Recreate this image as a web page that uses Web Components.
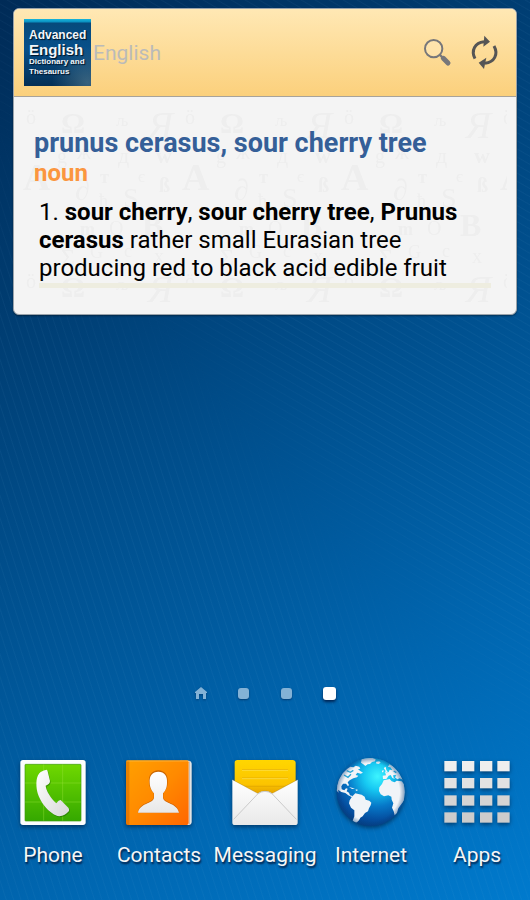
<!DOCTYPE html>
<html lang="en">
<head>
<meta charset="utf-8">
<meta name="viewport" content="width=device-width, initial-scale=1">
<title>Home</title>
<style>
    html, body {
        margin: 0;
        background: #0062ad;
        font-family: Roboto, "Liberation Sans", sans-serif;
    }
</style>
</head>
<body>
<home-screen>
    <dictionary-widget slot="widget" placeholder="English">
        <word-entry word="prunus cerasus, sour cherry tree" pos="noun">
            1. <b>sour cherry</b>, <b>sour cherry tree</b>, <b>Prunus cerasus</b> rather small Eurasian tree producing red to black acid edible fruit
        </word-entry>
    </dictionary-widget>
    <page-dots slot="pages" count="4" current="4"></page-dots>
    <app-icon slot="dock" icon="phone">Phone</app-icon>
    <app-icon slot="dock" icon="contacts">Contacts</app-icon>
    <app-icon slot="dock" icon="messaging">Messaging</app-icon>
    <app-icon slot="dock" icon="internet">Internet</app-icon>
    <app-icon slot="dock" icon="apps">Apps</app-icon>
</home-screen>

<script>
/**
 * Full screen wallpaper with a widget area, page dots and a dock
 */
class HomeScreen extends HTMLElement {
    constructor() {
        super();
        this.attachShadow({ mode: 'open' });
    }

    connectedCallback() {
        this.shadowRoot.innerHTML = `
            <style>
                :host {
                    display: flex;
                    flex-direction: column;
                    position: relative;
                    isolation: isolate;
                    box-sizing: border-box;
                    min-height: 100vh;
                    padding: 8px 0 33px;
                    background: linear-gradient(148deg, #002b57 0%, #003c70 25%, #005190 50%, #0066b0 75%, #007acd 100%);
                }
                /* two sets of fine lines that fade into each other */
                :host::before, :host::after {
                    content: "";
                    position: absolute;
                    inset: 0;
                    z-index: -1;
                }
                :host::before {
                    background: repeating-linear-gradient(72deg, transparent 0 5px, rgba(120, 190, 230, 0.06) 6px, transparent 7px);
                    mask-image: linear-gradient(50deg, #000 40%, transparent 52%);
                }
                :host::after {
                    background: repeating-linear-gradient(30deg, transparent 0 5px, rgba(120, 190, 230, 0.06) 6px, transparent 7px);
                    mask-image: linear-gradient(50deg, transparent 48%, #000 60%);
                }
                main {
                    flex: 1;
                    padding: 0 13px;
                }
                nav {
                    display: grid;
                    grid-template-columns: repeat(5, minmax(0, 1fr));
                    margin-top: 48px;
                }
            </style>
            <main><slot name="widget"></slot></main>
            <slot name="pages"></slot>
            <nav aria-label="Dock"><slot name="dock"></slot></nav>
        `;
    }
}

/**
 * Dictionary card: logo, search field and the entry passed in the slot
 */
class DictionaryWidget extends HTMLElement {
    constructor() {
        super();
        this.attachShadow({ mode: 'open' });
    }

    connectedCallback() {
        const placeholder = this.getAttribute('placeholder') || '';

        this.shadowRoot.innerHTML = `
            <style>
                :host {
                    display: block;
                    border: 1px solid #9aa3ab;
                    border-radius: 6px;
                    overflow: hidden;
                    background: #f4f4f4;
                    box-shadow: 0 1px 2px rgba(0, 0, 0, 0.4);
                }
                header {
                    display: flex;
                    align-items: center;
                    padding: 10px 9px 10px 10px;
                    background: linear-gradient(#ffe8b4, #fbd07c);
                    border-bottom: 1px solid #a8a39a;
                }
                form {
                    display: flex;
                    flex: 1;
                    align-items: center;
                    min-width: 0;
                }
                input {
                    flex: 1;
                    min-width: 0;
                    height: 48px;
                    padding: 0 2px;
                    border: 0;
                    outline: 0;
                    background: none;
                    color: #333;
                    font: 21px Roboto, "Liberation Sans", sans-serif;
                }
                input::placeholder {
                    color: #bbbbb9;
                    opacity: 1;
                }
                button {
                    display: grid;
                    place-items: center;
                    width: 47px;
                    height: 48px;
                    padding: 0;
                    border: 0;
                    background: none;
                }
                svg {
                    display: block;
                    width: 36px;
                    height: 36px;
                }
            </style>
            <header>
                <dictionary-logo></dictionary-logo>
                <form onsubmit="return false">
                    <input type="text" aria-label="Search" placeholder="${placeholder}">
                    <button type="submit" aria-label="Find">
                        <svg viewBox="462 104 108 108">
                            <path d="M525 164 L536 175" stroke="#77777a" stroke-width="7"/>
                            <circle cx="506" cy="145" r="26" fill="#ffeec9" fill-opacity=".35" stroke="#77777a" stroke-width="6"/>
                            <path d="M535 174 L549 188" stroke="#77777a" stroke-width="15" stroke-linecap="round"/>
                        </svg>
                    </button>
                    <button type="button" aria-label="Refresh">
                        <svg viewBox="603 104 108 108">
                            <path d="M630 175 C617 150 630 127 657 124" fill="none" stroke="#555" stroke-width="9"/>
                            <path d="M658 106 L675 124 L655 139 Z" fill="#555"/>
                            <path d="M687 137 C701 162 688 186 660 189" fill="none" stroke="#555" stroke-width="9"/>
                            <path d="M657 206 L641 187 L664 172 Z" fill="#555"/>
                        </svg>
                    </button>
                </form>
            </header>
            <slot></slot>
        `;
    }
}

/**
 * Square dictionary logo
 */
class DictionaryLogo extends HTMLElement {
    constructor() {
        super();
        this.attachShadow({ mode: 'open' });
    }

    connectedCallback() {
        this.shadowRoot.innerHTML = `
            <style>
                :host {
                    display: block;
                    box-sizing: border-box;
                    width: 67px;
                    height: 67px;
                    padding: 9px 0 0 5px;
                    background:
                        radial-gradient(circle at 95% 95%, rgba(90, 130, 150, 0.6), transparent 40%),
                        linear-gradient(#18b6dc 0, #0a8fc0 3px, #064a7c 4px, #07508a 45%, #042f55 100%);
                    color: #f2f6fa;
                    font-family: "Liberation Sans", Arial, sans-serif;
                    font-weight: bold;
                    white-space: nowrap;
                    text-shadow: 1px 1px 1px #012;
                }
                span {
                    display: block;
                    font-size: 8px;
                    line-height: 10px;
                }
                .top {
                    font-size: 12px;
                    line-height: 14px;
                }
                .name {
                    font-size: 15px;
                    line-height: 15px;
                }
            </style>
            <span class="top">Advanced</span>
            <span class="name">English</span>
            <span>Dictionary and</span>
            <span>Thesaurus</span>
        `;
    }
}

/**
 * One dictionary entry on a faint sheet of scattered letters
 */
class WordEntry extends HTMLElement {
    constructor() {
        super();
        this.attachShadow({ mode: 'open' });
    }

    /**
     * Letters of one background tile: glyph, x, baseline, size, weight
     */
    getLetters() {
        return [
            ['ö', 3, 15, 20, 400], ['Ω', 38, 24, 30, 700], ['љ', 93, 17, 17, 400],
            ['g', 34, 54, 20, 400], ['ж', 54, 50, 20, 400], ['д', 95, 54, 22, 400],
            ['w', 133, 54, 22, 700], ['A', 0, 81, 38, 700], ['∂', 52, 91, 30, 400],
            ['т', 77, 74, 18, 700], ['є', 115, 73, 16, 400], ['ß', 136, 83, 20, 700],
            ['S', 100, 98, 28, 400], ['ђ', 76, 98, 18, 400], ['m', 57, 126, 18, 700],
            ['O', 86, 126, 20, 400], ['B', 119, 127, 32, 700], ['Σ', 38, 156, 24, 400],
            ['G', 67, 149, 18, 400], ['c', 101, 148, 18, 400], ['x', 131, 154, 20, 400]
        ];
    }

    connectedCallback() {
        const word = this.getAttribute('word') || '';
        const pos = this.getAttribute('pos') || '';
        const letters = this.getLetters().map(([glyph, x, y, size, weight]) =>
            `<text x="${x}" y="${y}" font-size="${size}" font-weight="${weight}">${glyph}</text>`
        ).join('');

        this.shadowRoot.innerHTML = `
            <style>
                :host {
                    display: block;
                    position: relative;
                    padding: 30px 20px 26px;
                    color: #000;
                }
                .sheet {
                    position: absolute;
                    inset: 12px 9px 9px;
                    width: calc(100% - 18px);
                    height: calc(100% - 21px);
                }
                article {
                    position: relative;
                }
                h1, h2, p {
                    margin: 0;
                }
                h1 {
                    color: #355f98;
                    font-size: 27px;
                    line-height: 32px;
                }
                h2 {
                    color: #fb963f;
                    font-size: 24px;
                    line-height: 28px;
                }
                p {
                    margin: 11px 5px 0;
                    padding-bottom: 1px;
                    border-bottom: 5px solid #eeede0;
                    font-size: 24px;
                    line-height: 28px;
                }
            </style>
            <svg class="sheet" aria-hidden="true">
                <defs>
                    <pattern id="letters" width="159" height="164" patternUnits="userSpaceOnUse">
                        <g fill="#eeeeee" font-family="Liberation Serif, serif">
                            ${letters}
                            <text x="125" y="29" font-size="38" font-style="italic">Я</text>
                        </g>
                    </pattern>
                </defs>
                <rect width="100%" height="100%" fill="url(#letters)"/>
            </svg>
            <article>
                <h1>${word}</h1>
                <h2>${pos}</h2>
                <p><slot></slot></p>
            </article>
        `;
    }
}

/**
 * Row of page markers, the first one is the home page
 */
class PageDots extends HTMLElement {
    constructor() {
        super();
        this.attachShadow({ mode: 'open' });
    }

    static get observedAttributes() {
        return ['count', 'current'];
    }

    connectedCallback() {
        this.render();
    }

    attributeChangedCallback(name, oldValue, newValue) {
        if (oldValue !== newValue) {
            this.render();
        }
    }

    render() {
        const count = Number(this.getAttribute('count')) || 1;
        const current = Number(this.getAttribute('current')) || 1;
        const home = '<svg viewBox="0 0 12 12"><path d="M6 0 L12 5 V6 H11 V12 H8 V7 H4 V12 H1 V6 H0 V5 Z" fill="#83b2d6"/></svg>';

        let dots = '';
        for (let i = 1; i <= count; i++) {
            const state = i === current ? ' aria-current="page"' : '';
            dots += `<button type="button" aria-label="Page ${i}"${state}>${i === 1 ? home : '<i></i>'}</button>`;
        }

        this.shadowRoot.innerHTML = `
            <style>
                :host {
                    display: flex;
                    justify-content: center;
                }
                button {
                    display: grid;
                    place-items: center;
                    width: 43px;
                    height: 32px;
                    padding: 0;
                    border: 0;
                    background: none;
                }
                svg {
                    width: 12px;
                    height: 12px;
                    filter: drop-shadow(0 1px 1px rgba(0, 20, 60, 0.4));
                }
                i {
                    width: 11px;
                    height: 11px;
                    border-radius: 3px;
                    background: #83b2d6;
                    box-shadow: 0 1px 2px rgba(0, 20, 60, 0.5);
                }
                [aria-current] i {
                    width: 13px;
                    height: 13px;
                    background: #fff;
                    box-shadow: 0 2px 3px rgba(0, 20, 60, 0.8);
                }
            </style>
            ${dots}
        `;
    }
}

/**
 * Dock launcher: a drawn icon above its slotted label
 */
class AppIcon extends HTMLElement {
    constructor() {
        super();
        this.attachShadow({ mode: 'open' });
    }

    /**
     * Get the drawing for an icon name
     */
    getIcon(name) {
        const icons = {
            phone: `
                <svg viewBox="51 51 216 216">
                    <defs>
                        <linearGradient id="green" x2="0" y2="1"><stop stop-color="#6fd800"/><stop offset="1" stop-color="#35a800"/></linearGradient>
                        <linearGradient id="handset" x2="1" y2="1"><stop stop-color="#fff"/><stop offset="1" stop-color="#d8d8d8"/></linearGradient>
                    </defs>
                    <rect x="61" y="60" width="196" height="195" rx="8" fill="#fdfdfd"/>
                    <rect x="75" y="73" width="168" height="170" rx="2" fill="url(#green)" stroke="#3c9a0c" stroke-width="2"/>
                    <path d="M131 73 V242 M188 73 V242 M75 129 H243 M75 186 H243" stroke="#9be63a" stroke-opacity=".6" stroke-width="2"/>
                    <path d="M122 96 Q132 90 140 89 Q143 91 144 98 L150 123 Q150 133 137 137 C138 152 154 177 169 190 Q176 180 182 180 L205 203 Q208 206 207 213 Q195 227 178 229 C150 224 120 188 112 156 C107 132 108 106 122 96 Z" fill="#1f6b00" opacity=".55" transform="translate(2 3)"/>
                    <path d="M122 96 Q132 90 140 89 Q143 91 144 98 L150 123 Q150 133 137 137 C138 152 154 177 169 190 Q176 180 182 180 L205 203 Q208 206 207 213 Q195 227 178 229 C150 224 120 188 112 156 C107 132 108 106 122 96 Z" fill="url(#handset)"/>
                </svg>`,
            contacts: `
                <svg viewBox="369 51 216 216">
                    <defs>
                        <linearGradient id="orange" x2="1" y2="1"><stop stop-color="#ffa000"/><stop offset=".5" stop-color="#ff8a00"/><stop offset="1" stop-color="#ff6600"/></linearGradient>
                        <linearGradient id="person" x2="0" y2="1"><stop stop-color="#fff"/><stop offset="1" stop-color="#e8e8e8"/></linearGradient>
                    </defs>
                    <path d="M540 62 H568 Q575 63 575 71 V245 Q575 254 566 255 H540 Z" fill="#ececec"/>
                    <path d="M569 64 V253" stroke="#a99a90" stroke-width="2"/>
                    <path d="M384 61 H560 Q566 61 566 67 V249 Q566 255 560 255 H384 Q378 255 378 249 V67 Q378 61 384 61 Z" fill="url(#orange)"/>
                    <path d="M378 66 V249 Q378 255 384 255 H388 V61 H384 Q378 61 378 66 Z" fill="#c85a00" opacity=".4"/>
                    <path d="M379 63 H565" stroke="#ffc04a" stroke-width="2"/>
                    <path d="M475 91 C494 91 505 106 503 126 C503 144 496 152 490 159 V173 C494 190 534 186 537 218 H414 C417 186 457 190 461 173 V159 C454 152 448 144 447 126 C445 106 456 91 475 91 Z" fill="#a84a00" opacity=".6"/>
                    <path d="M475 95 C493 95 503 108 501 128 C501 145 495 153 489 160 V174 C493 192 532 189 537 218 H414 C419 189 458 192 462 174 V160 C456 153 450 145 449 128 C447 108 457 95 475 95 Z" fill="url(#person)"/>
                </svg>`,
            messaging: `
                <svg viewBox="51 51 216 216">
                    <defs>
                        <linearGradient id="yellow" x2="0" y2="1"><stop stop-color="#ffd600"/><stop offset=".6" stop-color="#fcc400"/><stop offset=".9" stop-color="#e09c00"/></linearGradient>
                        <linearGradient id="paper" x2="0" y2="1"><stop stop-color="#fff"/><stop offset="1" stop-color="#e9e9e9"/></linearGradient>
                    </defs>
                    <path d="M76 60 H242 Q250 60 251 68 V180 H68 V68 Q68 60 76 60 Z" fill="url(#yellow)"/>
                    <path d="M90 89 H228 M90 114 H228 M90 139 H228" stroke="#dda300" stroke-width="2"/>
                    <path d="M90 91 H228 M90 116 H228" stroke="#ffe65a" stroke-width="2"/>
                    <path d="M61 119 L137 160 Q147 153 159 153 Q171 153 181 160 L257 119 V248 Q257 255 249 255 H69 Q61 255 61 248 Z" fill="url(#paper)"/>
                    <path d="M62 119 L137 160 Q147 153 159 153 Q171 153 181 160 L256 119" fill="none" stroke="#98711a" stroke-opacity=".5" stroke-width="2"/>
                    <path d="M65 238 L137 162 Q148 154 159 154 Q170 154 181 162 L253 238" fill="none" stroke="#cbcbcb" stroke-width="3"/>
                </svg>`,
            internet: `
                <svg viewBox="369 51 216 216">
                    <defs>
                        <radialGradient id="ocean" cx=".6" cy=".27" r=".8"><stop stop-color="#3df4ff"/><stop offset=".25" stop-color="#16c8f2"/><stop offset=".55" stop-color="#0678c8"/><stop offset=".8" stop-color="#044d9e"/><stop offset="1" stop-color="#033878"/></radialGradient>
                        <radialGradient id="rim"><stop offset=".85" stop-color="#063f7e" stop-opacity="0"/><stop offset="1" stop-color="#063f7e" stop-opacity=".45"/></radialGradient>
                        <clipPath id="ball"><circle cx="476" cy="156" r="102"/></clipPath>
                    </defs>
                    <circle cx="476" cy="156" r="102" fill="url(#ocean)"/>
                    <g clip-path="url(#ball)" fill="#f0f4f8">
                        <path d="M449 57 L447 68 L454 73 L460 78 L467 73 L474 72 L480 66 L489 64 L491 58 L480 53 L462 53 Z"/>
                        <path d="M372 150 L378 122 L392 100 L406 86 L415 80 L424 82 L431 77 L442 80 L445 86 L438 88 L446 94 L453 98 L446 101 L436 98 L431 105 L439 107 L435 112 L424 115 L413 121 L407 127 L411 135 L408 139 L402 131 L393 131 L388 139 L389 148 L397 151 L402 145 L407 146 L404 154 L411 158 L414 166 L422 168 L420 172 L409 166 L400 159 L388 156 L378 149 L380 158 Z"/>
                        <path d="M411 141 L420 143 L429 147 L420 147 Z M431 148 L439 150 L432 153 Z"/>
                        <path d="M420 170 L430 160 L439 162 L449 164 L458 170 L461 179 L472 182 L478 188 L476 196 L471 205 L468 214 L459 219 L452 229 L445 233 L441 241 L435 247 L425 249 L422 242 L427 229 L427 211 L417 203 L411 190 L413 181 Z"/>
                        <path d="M493 65 L502 64 L506 68 L499 72 L492 70 Z M515 84 L521 80 L523 90 L528 97 L518 99 L521 93 Z M510 92 L515 90 L514 97 L510 97 Z"/>
                        <path d="M512 107 L522 106 L520 99 L530 96 L533 89 L541 90 L535 82 L528 81 L532 73 L542 78 L556 90 L570 110 L574 120 L563 115 L556 118 L549 112 L553 106 L544 105 L544 112 L549 117 L541 114 L536 105 L530 107 L523 117 L513 117 Z"/>
                        <path d="M515 121 L533 117 L539 124 L548 127 L554 122 L569 124 L581 138 L581 176 L570 190 L559 205 L555 219 L548 226 L545 214 L540 203 L544 190 L539 179 L538 170 L529 166 L516 169 L506 163 L501 153 L502 142 L510 132 Z"/>
                    </g>
                    <path d="M396 105 L408 112 L417 103 M404 92 L415 97 L424 91 M545 93 L553 98" fill="none" stroke="#2ba9d7" stroke-width="4" clip-path="url(#ball)"/>
                    <circle cx="476" cy="156" r="102" fill="url(#rim)"/>
                </svg>`,
            apps: `
                <svg viewBox="333 51 216 216">
                    ${[63, 114, 166, 217].map((y, row) => [343, 396, 450, 502].map(x =>
                        `<rect x="${x}" y="${y}" width="37" height="31" fill="${['#eeeeee', '#e2e2e2', '#d4d4d4', '#cccccc'][row]}"/>`
                    ).join('')).join('')}
                </svg>`
        };
        return icons[name] || '';
    }

    connectedCallback() {
        this.shadowRoot.innerHTML = `
            <style>
                :host {
                    display: block;
                }
                button {
                    display: flex;
                    flex-direction: column;
                    align-items: center;
                    gap: 14px;
                    width: 100%;
                    padding: 0;
                    border: 0;
                    background: none;
                    color: #f6f6f6;
                    font: 21px/24px Roboto, "Liberation Sans", sans-serif;
                    text-shadow: 1px 2px 2px rgba(0, 10, 40, 0.8);
                }
                svg {
                    width: 72px;
                    height: 72px;
                    filter: drop-shadow(0 2px 2px rgba(0, 20, 50, 0.55));
                }
            </style>
            <button type="button">${this.getIcon(this.getAttribute('icon'))}<span><slot></slot></span></button>
        `;
    }
}

// Register the custom elements
customElements.define('home-screen', HomeScreen);
customElements.define('dictionary-widget', DictionaryWidget);
customElements.define('dictionary-logo', DictionaryLogo);
customElements.define('word-entry', WordEntry);
customElements.define('page-dots', PageDots);
customElements.define('app-icon', AppIcon);
</script>
</body>
</html>
